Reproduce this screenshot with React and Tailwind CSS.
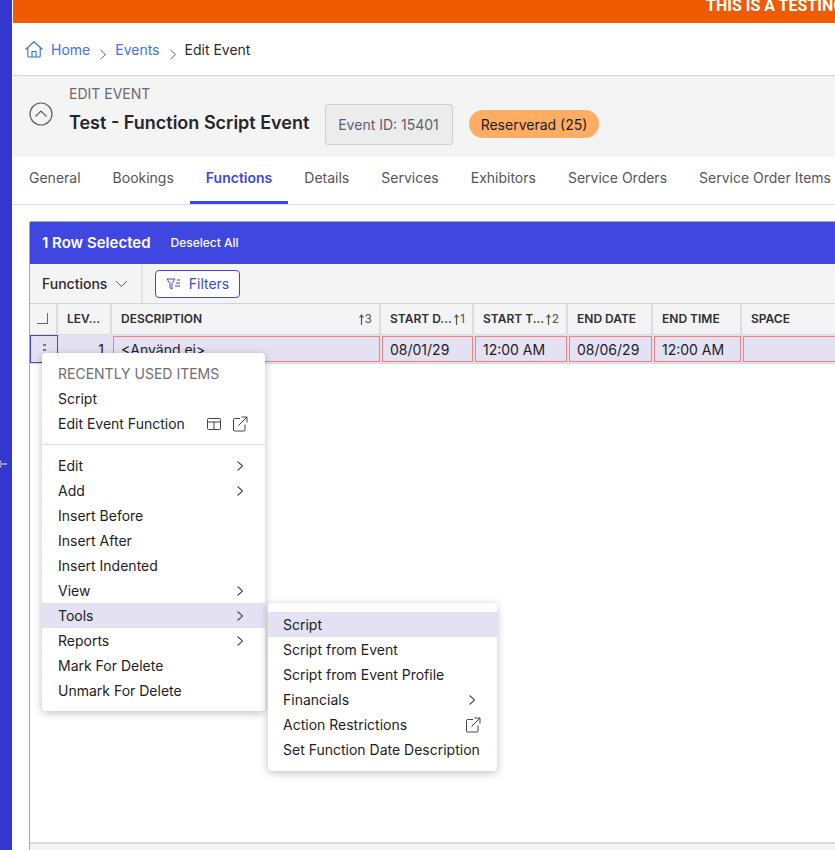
import React from "react";

const Ext = ({ className = "" }) => (
  <svg width="16" height="16" viewBox="0 0 16 16" fill="none" stroke="currentColor" strokeWidth="1" className={className}>
    <path d="M8 2.500H2.500a1 1 0 0 0-1 1V14a1 1 0 0 0 1 1H12a1 1 0 0 0 1-1V8.500" />
    <path d="M6.500 9.500 15 1M9.500 1H15v5.500" />
  </svg>
);
const Chev = () => (
  <svg width="8" height="12" viewBox="0 0 8 12" fill="none" stroke="#4b4b4b" strokeWidth="1.100"><path d="M1.500 1.500 6.500 6l-5 4.500" /></svg>
);
const Crumb = () => (
  <svg width="8" height="11" viewBox="0 0 8 11" fill="none" stroke="#6b6b6b" strokeWidth="1" className="mt-[9px]"><path d="M1.500 1 6.500 5.500l-5 4.500" /></svg>
);
const Item = ({ label, sub, hl, right, tight }) => (
  <div className={`h-[25px] flex items-center justify-between ${tight ? "pl-[15px]" : "pl-4"} pr-[21px] text-[14px] leading-[25px] text-[#1d1d1f] whitespace-nowrap ${hl ? "bg-[#e4e1f3]" : ""}`}>
    <span>{label}</span>
    {sub && <Chev />}
    {right}
  </div>
);
const Sort = ({ n }) => (
  <span className="flex items-center gap-[1px] font-normal text-[#555] whitespace-nowrap">
    <svg width="5" height="11" viewBox="0 0 5 11" fill="none" stroke="#555" strokeWidth="1.200"><path d="M2.500 11V1M.5 3.500 2.500 1l2 2.500" /></svg>
    {n}
  </span>
);
const Th = ({ w, children, sort }) => (
  <div className={`${w} h-full shrink-0 flex items-center justify-between pl-[9px] pr-[7px] border-r-2 border-[#dcdcdc] text-[12px] font-semibold text-[#2d2d33]`}>
    <span className="whitespace-nowrap">{children}</span>
    {sort && <Sort n={sort} />}
  </div>
);
const Td = ({ w, children }) => (
  <div className={`${w} h-full shrink-0 pl-[1px] pr-[1px] py-[1px]`}>
    <div className="h-full border border-[#f4827c] pl-[7px] flex items-center text-[14px] text-[#1d1d1f] overflow-hidden whitespace-nowrap">{children}</div>
  </div>
);

export default function App() {
  return (
    <div className="relative w-[835px] h-[850px] overflow-hidden bg-white flex font-['Inter',sans-serif]">
      <div className="w-[12px] shrink-0 h-full bg-[#3535d0] relative">
        <svg width="10" height="8" viewBox="0 0 10 8" fill="none" stroke="#eeeefa" strokeWidth="1.200" className="absolute left-[-2px] top-[460px]"><path d="M0 4h9M3 1 0 4l3 3" /></svg>
      </div>
      <div className="flex-1 min-w-0 flex flex-col ml-[1px]">
        <div className="h-[23px] shrink-0 bg-[#f05a00] overflow-hidden relative">
          <span className="absolute left-[693px] top-[-3px] text-[16px] leading-[18px] font-bold text-white whitespace-nowrap font-['Roboto',sans-serif]">THIS IS A TESTING</span>
        </div>
        <div className="h-[53px] shrink-0 border-b border-[#d4d4d4] flex items-start pl-[12px] pt-[17px] text-[14px] leading-5 gap-[9px]">
          <svg width="18" height="17" viewBox="0 0 18 17" fill="none" stroke="#2f6fed" strokeWidth="1.100" className="mt-[1px]">
            <path d="M.5 8.500 9 .8l8.500 7.700M2.800 6.500V15a1 1 0 0 0 1 1h10.400a1 1 0 0 0 1-1V6.500M7 16v-5.500h4V16" />
          </svg>
          <span className="text-[#4470ee] ml-[-1px]">Home</span>
          <Crumb />
          <span className="text-[#4470ee] ml-[-1px]">Events</span>
          <Crumb />
          <span className="text-[#2a2a30] ml-[-1px]">Edit Event</span>
        </div>
        <div className="h-[81px] shrink-0 bg-[#f4f4f4] flex items-start pl-[16px]">
          <svg width="24" height="24" viewBox="0 0 24 24" fill="none" stroke="#5f5f5f" strokeWidth="1.200" className="mt-[26px]">
            <circle cx="12" cy="12" r="11" /><path d="M6.500 14.500 12 9l5.500 5.500" />
          </svg>
          <div className="ml-[16px] w-[256px] shrink-0">
            <div className="mt-[9px] text-[14px] leading-[18px] text-[#6a6a70]">EDIT EVENT</div>
            <div className="mt-[7px] text-[18px] leading-[26px] font-semibold text-[#25252b] whitespace-nowrap">Test - Function Script Event</div>
          </div>
          <div className="mt-[28px] h-[41px] w-[128px] rounded-[3px] border border-[#cfcfcf] bg-[#ececec] flex items-center justify-center pr-[1px] text-[14px] text-[#5a5f6a]">Event ID: 15401</div>
          <div className="mt-[34px] ml-[16px] h-[28px] w-[130px] rounded-full bg-[#ffad62] flex items-center justify-center text-[14px] text-[#1d1d1f]">Reserverad (25)</div>
        </div>
        <div className="h-[48px] shrink-0 border-b border-[#dcdcdc] flex text-[14px] text-[#55555b] whitespace-nowrap">
          {["General", "Bookings", "Functions", "Details", "Services", "Exhibitors", "Service Orders", "Service Order Items"].map((t) => (
            <div key={t} className={`px-4 pt-[11px] h-[47px] leading-5 ${t === "Functions" ? "border-b-[3px] border-[#4046e0] text-[#4046e0] font-semibold" : ""}`}>{t}</div>
          ))}
        </div>
        <div className="flex-1 min-h-0 pt-[16px] pl-[16px]">
          <div className="w-[860px] h-[700px] border-l border-t border-[#a8a8a8] rounded-tl-[3px] flex flex-col">
            <div className="h-[42px] shrink-0 bg-[#4046e0] flex items-center pl-3 text-white">
              <span className="text-[15px] font-semibold">1 Row Selected</span>
              <span className="ml-[20px] text-[12px] font-medium">Deselect All</span>
            </div>
            <div className="h-[39px] shrink-0 bg-[#f4f4f4] flex items-center">
              <div className="w-[113px] h-full shrink-0 border-r-2 border-[#e3e3e3] flex items-center pl-3 gap-[8px] text-[14px] font-medium text-[#2a2a30]">
                Functions
                <svg width="13" height="8" viewBox="0 0 13 8" fill="none" stroke="#666" strokeWidth="1"><path d="M1 1l5.500 5.500L12 1" /></svg>
              </div>
              <div className="ml-[12px] h-[28px] w-[85px] rounded-[4px] border border-[#4046e0] bg-white flex items-center justify-center gap-[8px] text-[14px] text-[#4046e0]">
                <svg width="15" height="12" viewBox="0 0 15 12" fill="none" stroke="#4046e0" strokeWidth="1"><path d="M1 1h8L6 5.500V11L4 10V5.500zM10 5h4M9 8h5M11 2h3" /></svg>
                Filters
              </div>
            </div>
            <div className="h-[31px] shrink-0 bg-[#f4f4f4] border-t border-[#d4d4d4] flex items-center">
              <div className="w-[28px] h-full shrink-0 border-r-2 border-[#dcdcdc] relative">
                <div className="absolute left-[7px] top-[9px] w-[11px] h-[11px] border-r border-b border-[#666]" />
              </div>
              <Th w="w-[54px]">LEV...</Th>
              <Th w="w-[269px]" sort="3">DESCRIPTION</Th>
              <Th w="w-[93px]" sort="1">START D...</Th>
              <Th w="w-[94px]" sort="2">START T...</Th>
              <Th w="w-[85px]">END DATE</Th>
              <Th w="w-[89px]">END TIME</Th>
              <Th w="w-[120px]">SPACE</Th>
            </div>
            <div className="h-[30px] shrink-0 bg-[#e4e1f3] border-y border-[#dcdcdc] flex items-center">
              <div className="w-[28px] h-full shrink-0 border border-[#4046e0] flex flex-col items-center gap-[3px] pt-[8px]">
                <span className="w-[3px] h-[2px] bg-[#777]" /><span className="w-[3px] h-[2px] bg-[#777]" /><span className="w-[3px] h-[2px] bg-[#777]" />
              </div>
              <div className="w-[54px] h-full shrink-0 flex items-center justify-end pr-[8px] text-[14px] text-[#1d1d1f]">1</div>
              <Td w="w-[269px]">&lt;Använd ej&gt;</Td>
              <Td w="w-[93px]">08/01/29</Td>
              <Td w="w-[94px]">12:00 AM</Td>
              <Td w="w-[85px]">08/06/29</Td>
              <Td w="w-[89px]">12:00 AM</Td>
              <Td w="w-[120px]"></Td>
            </div>
            <div className="h-[478px] shrink-0 bg-white" />
            <div className="flex-1 bg-[#f4f4f4] border-t-2 border-[#d9d9d9]" />
          </div>
        </div>
      </div>

      <div className="absolute left-[42px] top-[353px] w-[223px] h-[358px] rounded-[4px] bg-white shadow-[0_2px_8px_rgba(0,0,0,0.25)] pt-[8px]">
        <div className="h-[25px] flex items-center pl-4 text-[14px] text-[#6e6e74]">RECENTLY USED ITEMS</div>
        <Item label="Script" />
        <Item label="Edit Event Function" right={
          <span className="flex items-center gap-[10px] mr-[-4px] text-[#444]">
            <svg width="16" height="14" viewBox="0 0 16 14" fill="none" stroke="currentColor" strokeWidth="1"><rect x="1.500" y="1.500" width="13" height="11" rx="1" /><path d="M1.500 5h13M8 5v7.500" /></svg>
            <Ext />
          </span>
        } />
        <div className="h-px bg-[#dcdcdc] mt-[8px] mb-[8px]" />
        <Item label="Edit" sub />
        <Item label="Add" sub />
        <Item label="Insert Before" />
        <Item label="Insert After" />
        <Item label="Insert Indented" />
        <Item label="View" sub />
        <Item label="Tools" sub hl />
        <Item label="Reports" sub />
        <Item label="Mark For Delete" />
        <Item label="Unmark For Delete" />
      </div>

      <div className="absolute left-[268px] top-[603px] w-[229px] h-[168px] rounded-[4px] bg-white shadow-[0_2px_8px_rgba(0,0,0,0.25)] pt-[9px]">
        <Item tight label="Script" hl />
        <Item tight label="Script from Event" />
        <Item tight label="Script from Event Profile" />
        <Item tight label="Financials" sub />
        <Item tight label="Action Restrictions" right={<Ext className="mr-[-5px] text-[#444]" />} />
        <Item tight label="Set Function Date Description" />
      </div>
    </div>
  );
}
